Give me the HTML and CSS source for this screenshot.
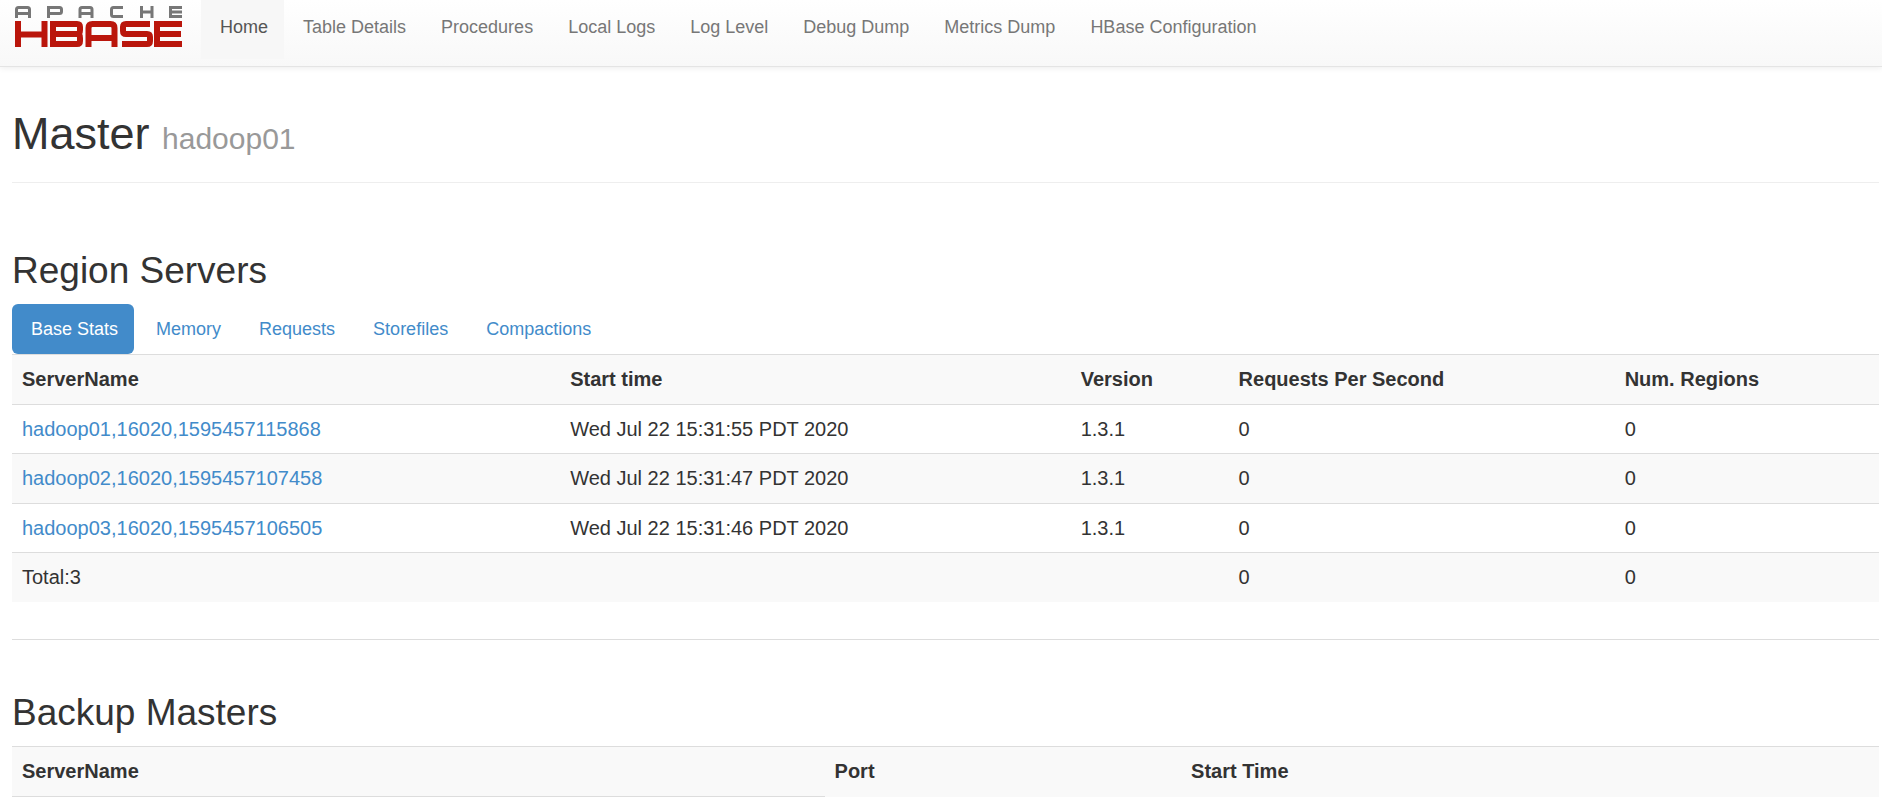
FILE: index.html
```html
<!DOCTYPE html>
<html lang="en">
<head>
<meta charset="UTF-8">
<meta name="viewport" content="width=device-width, initial-scale=1">
<title>Master: hadoop01</title>
<link rel="stylesheet" href="styles.css">
</head>
<body>

<nav class="navbar">
  <a class="navbar-brand" href="#">
    <svg width="168" height="42" viewBox="0 0 168 42" fill="none" role="img" aria-label="Apache HBase">
      <!-- apache -->
      <g stroke="#777" stroke-width="3">
        <path d="M1.500 13V4.500q0-2 2-2h9q2 0 2 2V13M1.500 8.500h13"/>
        <path d="M33.500 13V2.500h11q2 0 2 2v2q0 2-2 2h-11"/>
        <path d="M65 13V4.500q0-2 2-2h8q2 0 2 2V13M65 8.500h12"/>
        <path d="M108 2.500H98.500q-2 0-2 2v5q0 2 2 2h9.500"/>
        <path d="M126.500 1v12M137 1v12M126.500 7h10.500"/>
        <path d="M167 2.500h-11.500v9H167M155.500 7H167"/>
      </g>
      <!-- hbase -->
      <g stroke="#ba160c" stroke-width="6">
        <path d="M3 16v26M29.500 16v26M3 29.500h26.500"/>
        <path d="M38 19h24q3 0 3 3v3q0 4-3 4H38M62 29q3 0 3 4v3q0 3-3 3H38V16"/>
        <path d="M73.500 42V23q0-4 4-4h18q4 0 4 4v19M73.500 33h26"/>
        <path d="M135 19h-24q-3 0-3 3v4q0 3 3 3h21q3 0 3 3v4q0 3-3 3h-25"/>
        <path d="M167 19h-25v20h25M142 29h24"/>
      </g>
    </svg>
  </a>
  <ul class="navbar-nav">
    <li class="active"><a href="#">Home</a></li>
    <li><a href="#">Table Details</a></li>
    <li><a href="#">Procedures</a></li>
    <li><a href="#">Local Logs</a></li>
    <li><a href="#">Log Level</a></li>
    <li><a href="#">Debug Dump</a></li>
    <li><a href="#">Metrics Dump</a></li>
    <li><a href="#">HBase Configuration</a></li>
  </ul>
</nav>

<div class="container">
  <div class="page-header">
    <h1>Master <small>hadoop01</small></h1>
  </div>

  <section class="region-servers">
    <h2>Region Servers</h2>
    <ul class="nav-pills">
      <li class="active"><a href="#tab_baseStats">Base Stats</a></li>
      <li><a href="#tab_memoryStats">Memory</a></li>
      <li><a href="#tab_requestStats">Requests</a></li>
      <li><a href="#tab_storeStats">Storefiles</a></li>
      <li><a href="#tab_compactStats">Compactions</a></li>
    </ul>
    <table class="table" id="tab_baseStats">
      <tr>
        <th>ServerName</th>
        <th>Start time</th>
        <th>Version</th>
        <th>Requests Per Second</th>
        <th>Num. Regions</th>
      </tr>
      <tr>
        <td><a href="#">hadoop01,16020,1595457115868</a></td>
        <td>Wed Jul 22 15:31:55 PDT 2020</td>
        <td>1.3.1</td>
        <td>0</td>
        <td>0</td>
      </tr>
      <tr>
        <td><a href="#">hadoop02,16020,1595457107458</a></td>
        <td>Wed Jul 22 15:31:47 PDT 2020</td>
        <td>1.3.1</td>
        <td>0</td>
        <td>0</td>
      </tr>
      <tr>
        <td><a href="#">hadoop03,16020,1595457106505</a></td>
        <td>Wed Jul 22 15:31:46 PDT 2020</td>
        <td>1.3.1</td>
        <td>0</td>
        <td>0</td>
      </tr>
      <tr>
        <td>Total:3</td>
        <td></td>
        <td></td>
        <td>0</td>
        <td>0</td>
      </tr>
    </table>
  </section>

  <section class="backup-masters">
    <h2>Backup Masters</h2>
    <table class="table">
      <tr>
        <th>ServerName</th>
        <th>Port</th>
        <th>Start Time</th>
      </tr>
      <tr>
        <td></td>
      </tr>
    </table>
  </section>
</div>

</body>
</html>
```

FILE: styles.css
```css
* {
  box-sizing: border-box;
}
body {
  margin: 0;
  font-family: "Liberation Sans", Arial, sans-serif;
  font-size: 20px;
  line-height: 29px;
  color: #333;
  background: #fff;
}
a {
  color: #428bca;
  text-decoration: none;
}
ul {
  list-style: none;
  margin: 0;
  padding: 0;
}

/* top bar */
.navbar {
  display: flex;
  align-items: flex-start;
  height: 67px;
  background: linear-gradient(#fff, #f8f8f8);
  border-bottom: 1px solid #e4e4e4;
  box-shadow: 0 1px 6px rgba(0, 0, 0, 0.08);
}
.navbar-brand {
  padding: 5px 18px 0 15px;
}
.navbar-brand svg {
  display: block;
}
.navbar-nav {
  display: flex;
  font-size: 18px;
}
.navbar-nav a {
  display: block;
  padding: 13px 16px 17px 19px;
  color: #777;
}
.navbar-nav .active a {
  color: #555;
  background: #f7f7f7;
}

.container {
  padding: 0 3px 0 12px;
}
h1,
h2 {
  margin: 0;
  font-weight: normal;
}
h1 {
  font-size: 45px;
  line-height: 50px;
}
h1 small {
  font-size: 30px;
  line-height: 1;
  color: #999;
}
h2 {
  font-size: 37px;
  line-height: 42px;
  margin-bottom: 12px;
}
.page-header {
  padding: 42px 0 23px;
  border-bottom: 1px solid #eee;
}
.region-servers {
  padding: 67px 0 37px;
  border-bottom: 1px solid #ddd;
}
.backup-masters {
  padding-top: 52px;
}

.nav-pills {
  display: flex;
  gap: 3px;
  font-size: 18px;
}
.nav-pills a {
  display: block;
  padding: 11px 16px 10px 19px;
  border-radius: 6px;
}
.nav-pills .active a {
  color: #fff;
  background: #428bca;
}

.table {
  width: 100%;
  border-collapse: collapse;
}
.table th,
.table td {
  padding: 10px;
  border-top: 1px solid #ddd;
  text-align: left;
}
.table tr:nth-child(odd) {
  background: #f9f9f9;
}
.table tr:nth-child(even) {
  line-height: 28px;
}
```
